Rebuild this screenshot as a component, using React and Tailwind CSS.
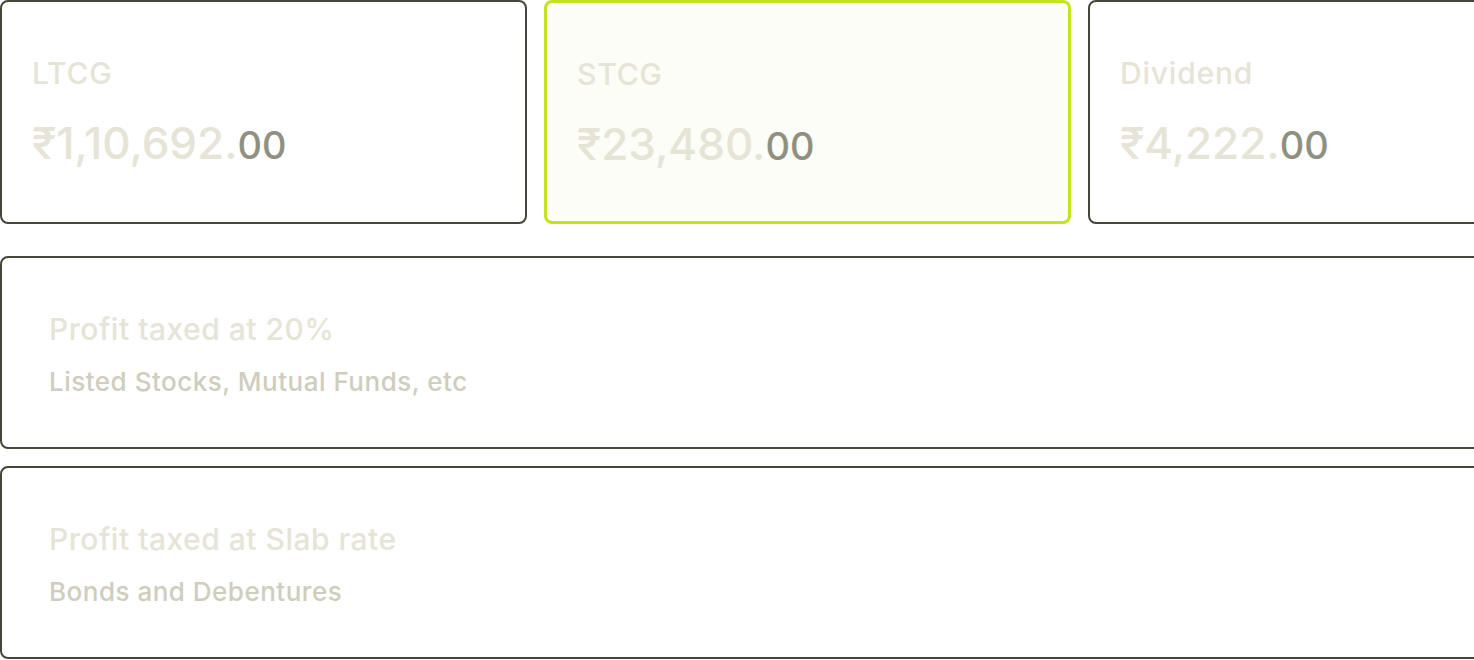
import React from 'react';

const cards = [
  { label: 'LTCG', whole: '₹1,10,692.', frac: '00', active: false },
  { label: 'STCG', whole: '₹23,480.', frac: '00', active: true },
  { label: 'Dividend', whole: '₹4,222.', frac: '00', active: false },
];

const groups = [
  { title: 'Profit taxed at 20%', sub: 'Listed Stocks, Mutual Funds, etc' },
  { title: 'Profit taxed at Slab rate', sub: 'Bonds and Debentures' },
];

const SummaryCard = ({ card }) => (
  <div
    className={`w-[527px] shrink-0 h-[224px] rounded-lg pl-[30px] pt-[53px] ${
      card.active
        ? 'border-[3px] border-[#c4e31c] bg-[#fcfdf6]'
        : 'border-2 border-[#45453a] bg-white'
    }`}
  >
    <div className="text-[30px] leading-[36px] font-medium text-[#e6e4d6] tracking-[0.8px]">{card.label}</div>
    <div className="mt-[26px] text-[44px] leading-[52px] font-medium text-[#e6e4d6]">
      {card.whole}
      <span className="text-[38px] text-[#8f9080]">{card.frac}</span>
    </div>
  </div>
);

const App = () => {
  return (
    <div className="w-[1474px] h-[660px] overflow-hidden bg-white font-['Inter',sans-serif]">
      <div className="w-[1640px]">
        <div className="flex gap-[17px]">
          {cards.map((c) => (
            <SummaryCard key={c.label} card={c} />
          ))}
        </div>

        <div className="mt-[32px] flex flex-col gap-[17px]">
          {groups.map((g) => (
            <div
              key={g.title}
              className="h-[193px] rounded-lg border-2 border-[#45453a] bg-white pl-[47px] pt-[53px]"
            >
              <div className="text-[30px] leading-[36px] font-medium text-[#e6e4d6] tracking-[0.5px]">{g.title}</div>
              <div className="mt-[19px] text-[26px] leading-[32px] font-medium text-[#cfcdbd] tracking-[0.5px]">{g.sub}</div>
            </div>
          ))}
        </div>
      </div>
    </div>
  );
};

export default App;
